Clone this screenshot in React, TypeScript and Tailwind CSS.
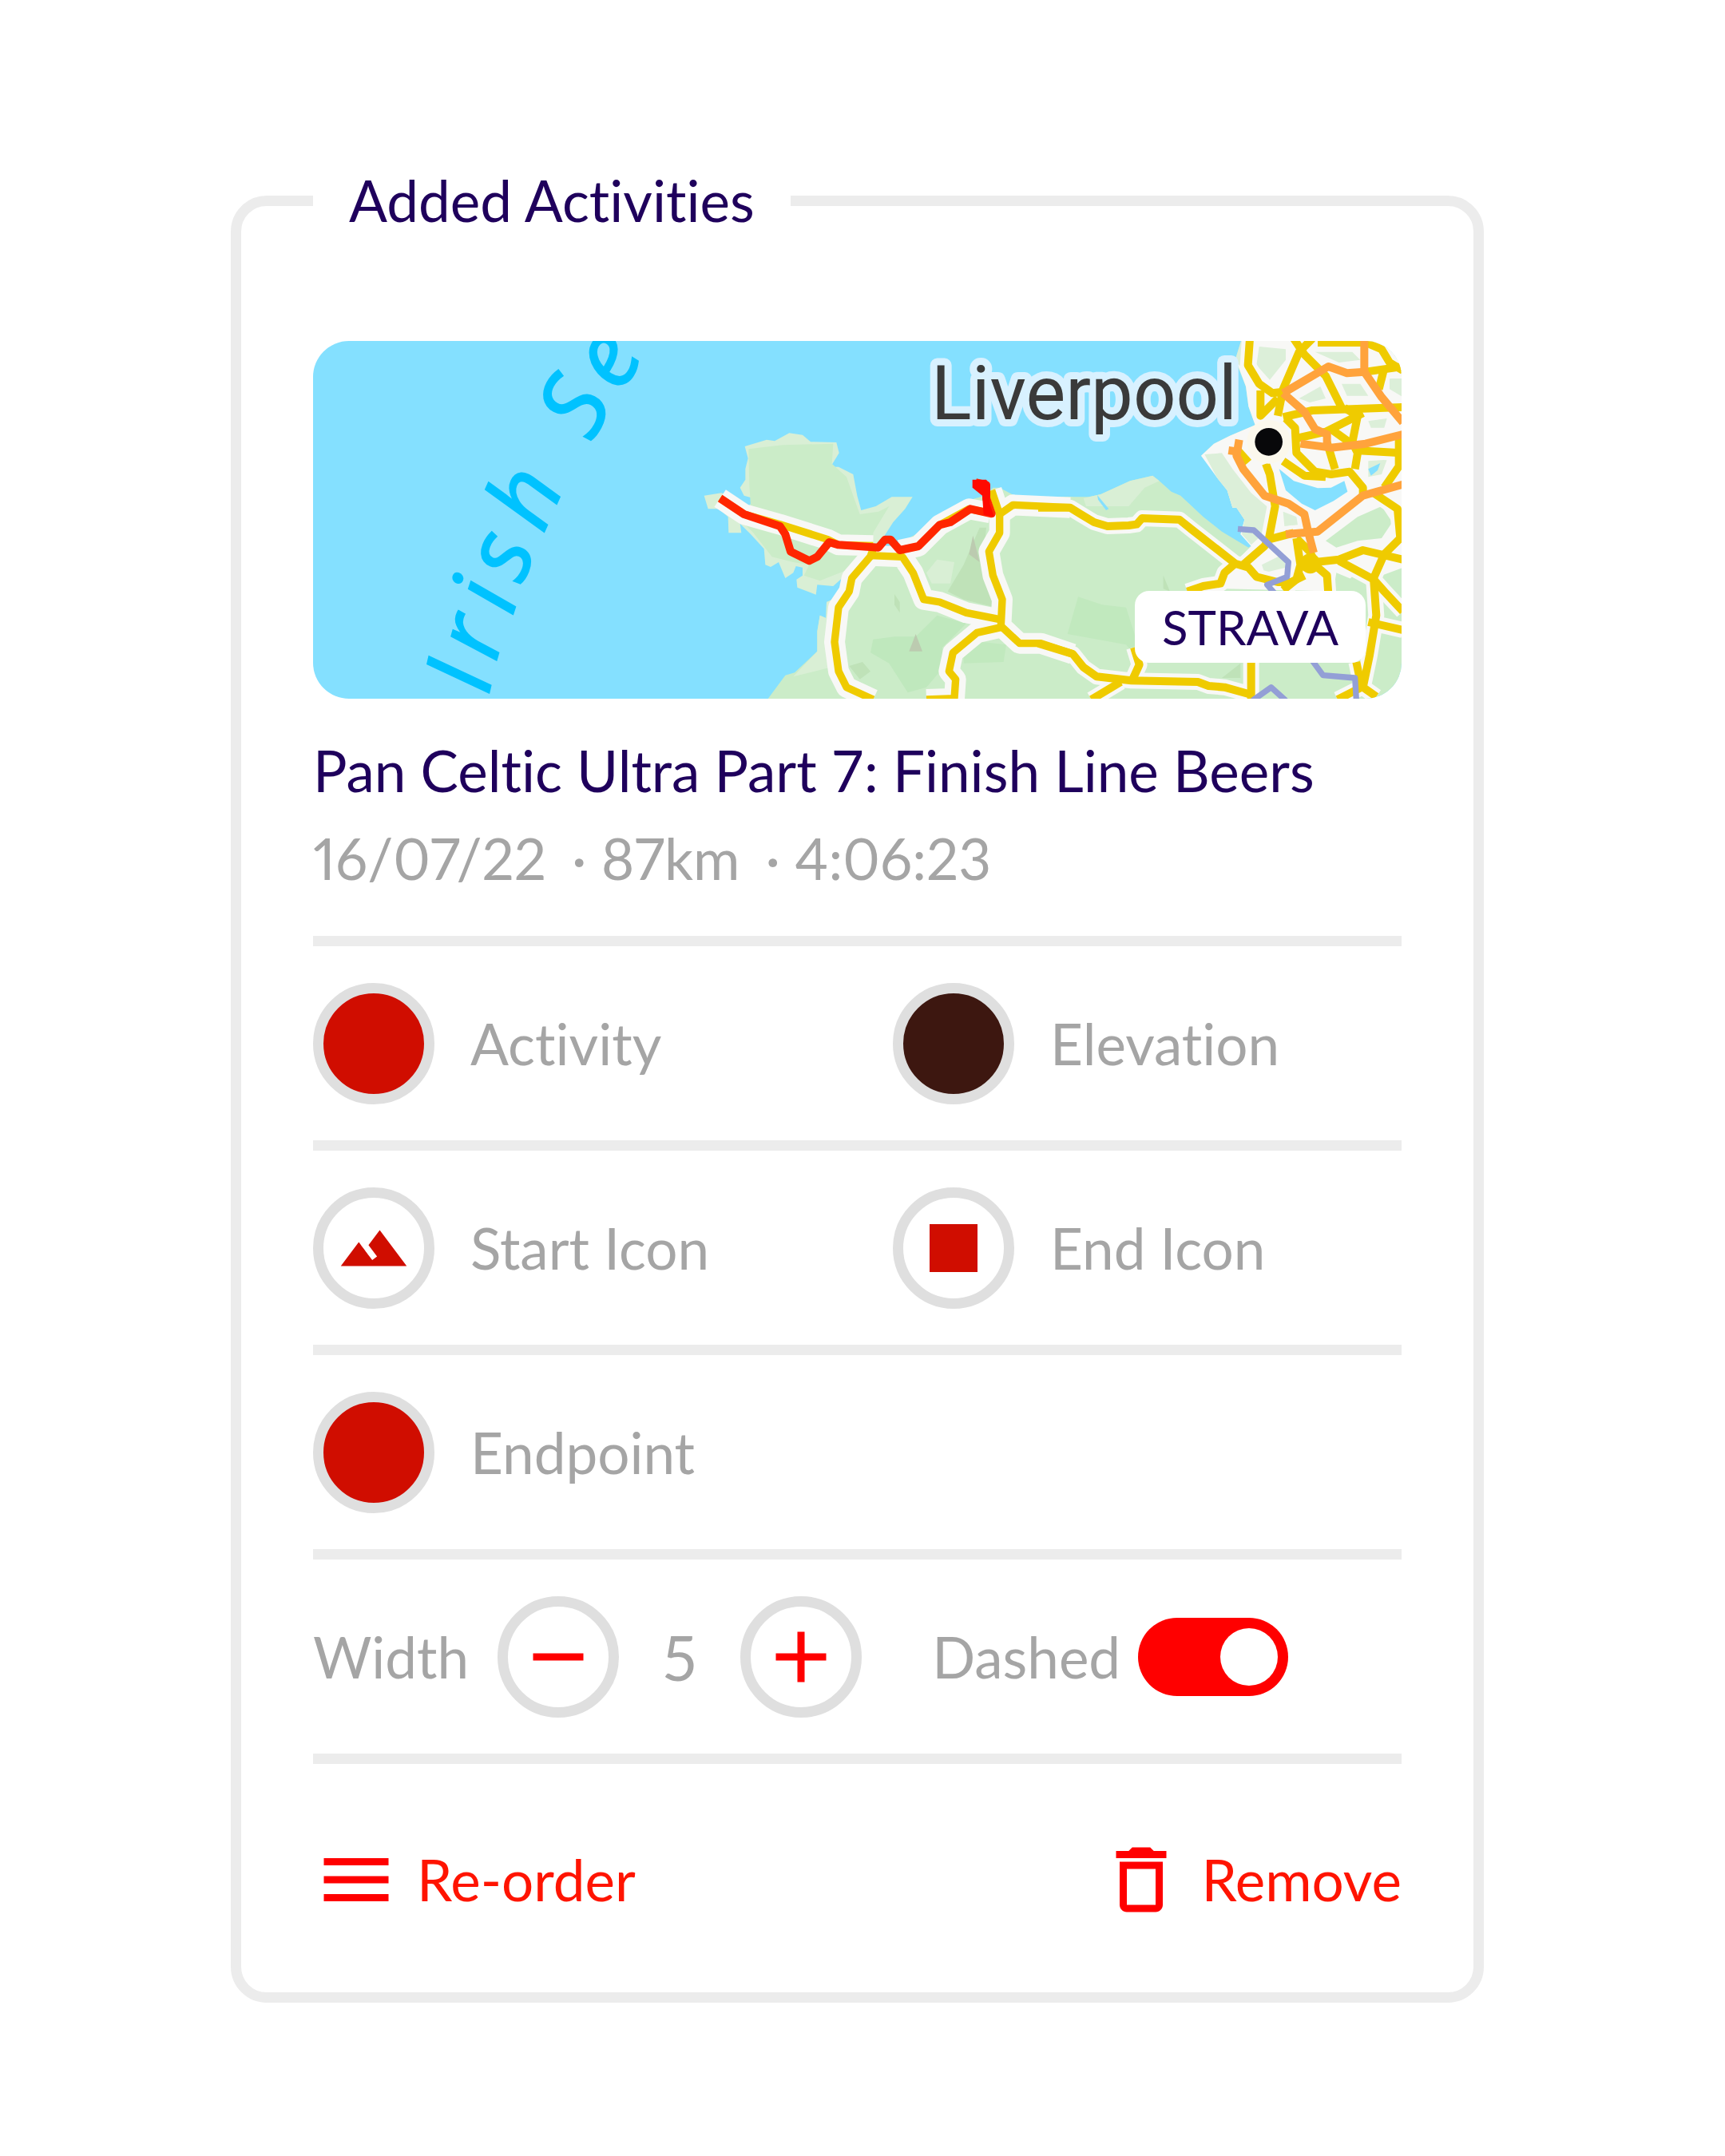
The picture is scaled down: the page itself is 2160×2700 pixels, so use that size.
import { useState } from "react";
import type { ReactNode } from "react";
import { MdAdd, MdDeleteOutline, MdLandscape, MdMenu, MdRemove } from "react-icons/md";

const WEST_ROADS = [
  "125,610 215,670 350,708 530,765 570,785 700,788",
  "800,805 870,790 950,710 1060,650 1140,665",
  "700,800 690,828 620,910 610,960 570,1020 555,1150 570,1260 600,1320 700,1366",
  "690,825 810,830 850,890 890,990 950,1000 1050,1040 1175,1065",
  "1145,580 1175,670 1175,740 1135,810 1150,900 1185,990 1180,1090 1250,1155 1330,1155 1450,1195",
  "1180,1095 1090,1115 1000,1190 985,1260 1010,1290 1005,1362 900,1366",
  "1175,670 1225,635 1440,645",
];

const EAST_ROADS = [
  "0,645 120,645 160,670 210,700 260,715 340,712 370,708 390,685 530,690 580,730 740,855 790,870 820,905 900,925 950,925 1000,900",
  "740,855 700,890 685,930 620,940 560,960",
  "770,860 850,790 865,765 960,740",
  "865,770 890,640 870,520 855,480",
  "795,10 788,110 830,180 880,215 920,210",
  "960,10 1000,70 1080,150 1140,270",
  "1030,10 980,60 920,200 900,300",
  "1050,25 1230,25 1290,50 1320,100 1370,130",
  "1230,135 1370,115",
  "1300,120 1280,200",
  "920,305 1030,280 1370,268",
  "835,205 835,300 900,235",
  "930,310 965,345 970,440 1040,510 1100,520 1170,510 1220,570 1220,600",
  "920,470 1000,525 1080,530",
  "1150,270 1200,300 1180,400 1200,440 1190,500",
  "1220,290 1080,360 970,385",
  "1100,350 1170,400",
  "1085,400 1115,500",
  "1190,430 1370,440",
  "1355,370 1355,490 1300,570",
  "1260,590 1350,650 1360,760 1300,820 1260,910 1270,1050 1245,1200 1220,1320 1270,1355",
  "1040,850 1130,840 1220,805 1370,840",
  "1130,845 1260,915 1300,960 1370,1035",
  "1050,870 1085,900 1090,970",
  "970,760 985,860 970,915 920,955",
  "970,760 1020,810 1040,850",
  "790,475 750,430",
  "1240,1075 1370,1105",
  "0,1155 130,1195 170,1245 220,1280 350,1295 600,1300 640,1315 700,1320 790,1345",
  "355,1290 380,1235 360,1170",
  "200,1366 310,1300",
  "800,1220 800,1366",
  "1195,1225 1215,1320 1125,1366",
];

const MOTORWAYS = [
  "920,215 1090,115 1160,140 1225,135 1290,230 1370,325",
  "1225,10 1225,135",
  "920,215 1000,285 1040,350 1085,370 1085,415",
  "985,405 1100,420 1230,405 1370,370",
  "755,390 745,450 770,500 850,600 940,630 1000,670 1015,740 1035,815",
  "715,430 750,435",
  "930,745 1050,735 1220,600 1370,558",
];

const BORDERS = [
  "750,725 810,730 940,850 935,905 860,935 900,980",
  "1030,1220 1070,1275 1190,1285 1195,1366",
  "805,1370 875,1320 930,1370",
];

const ROUTE =
  "125,610 215,670 350,715 370,745 390,810 460,845 490,830 535,775 570,785 720,795 745,765 765,765 800,805 870,790 950,710 990,700 1065,650 1145,668 1125,610 1125,560 1085,550";

function Lines({ lines, color, width }: { lines: string[]; color: string; width: number }) {
  return (
    <g fill="none" stroke={color} strokeWidth={width} strokeLinejoin="round">
      {lines.map((points) => (
        <polyline key={points} points={points} />
      ))}
    </g>
  );
}

function RouteMap() {
  return (
    <svg
      viewBox="0 0 4089 1344"
      preserveAspectRatio="xMidYMid slice"
      className="block h-full w-full"
      role="img"
      aria-label="Route map"
    >
      <rect width="4089" height="1344" fill="#84e0ff" />

      <g transform="translate(1404 -19)">
        <path
          fill="#d9efd5"
          d="M218 415L300 390 330 395 385 365 435 372 465 398 562 400 572 440 540 492 570 492 625 520 640 600 655 655 710 640 770 605 848 605 820 650 775 700 740 755 690 800 640 850 600 895 550 940 490 935 485 972 415 945 412 915 435 900 435 870 410 865 400 890 370 910 345 850 315 868 295 860 290 800 240 745 200 705 205 740 157 740 155 680 120 650 80 650 65 600 130 590 200 620 235 640 250 610 215 600 200 570 220 540 220 500 230 460Z"
        />
        <path
          fill="#cbecc8"
          d="M232 425L360 410 550 405 545 480 600 530 625 600 650 670 720 660 760 640 700 740 700 790 600 880 500 920 440 900 460 860 400 850 320 830 250 740 200 690 240 640 235 560Z"
        />
        <path
          fill="#cbecc8"
          d="M300 1370L370 1275 405 1265 490 1185 490 1110 500 1050 523 1060 525 1000 560 985 600 900 650 845 700 800 780 790 870 740 960 660 1050 620 1120 600 1150 570 1175 570 1240 605 1450 605 1450 1370Z"
        />
        <path fill="#d9efd5" d="M490 1185V1110L500 1050 523 1060 525 1000 560 985 545 1140 560 1240 400 1280Z" />
        <path fill="#bfe2b8" d="M1040 860L1100 720 1125 720 1110 870 1160 1020 1040 990 980 960Z" />
        <path fill="#d9efd5" d="M900 890L940 840 1005 850 990 930 920 930Z" />
        <path fill="#bfe8bd" d="M860 1130L940 1050 1050 1080 960 1170 960 1250 900 1320 830 1340 760 1230 690 1190 700 1140 780 1130Z" />
        <path fill="#bfe2b8" d="M610 1240L660 1225 690 1260 650 1290Z" />
        <path fill="#bfe2b8" d="M780 970L800 1000 800 1040 780 1010Z" />
        <path fill="#c1e9be" d="M1040 1200L1110 1150 1200 1160 1190 1225 1040 1230Z" />
        <path fill="#bccbb0" d="M1075 750L1100 850 1060 820ZM860 1120L885 1185H835Z" />
      </g>

      <g transform="translate(2724 -19)">
        <path
          fill="#cbecc8"
          d="M60 605H190L235 595 345 545 430 525 455 545 500 585 535 600 620 680 690 735 790 795 810 780 760 745 775 690 745 645 730 645 710 580 670 530 640 480 612 450 660 405 720 375 815 335 790 265 780 190 740 90 765 10H1400V1370H60Z"
        />
        <path fill="#d9efd5" d="M170 610L235 595 345 545 430 525 455 545 400 570 340 640 180 640Z" />
        <path
          fill="#f8f8f6"
          d="M612 450L660 405 720 375 815 335 790 265 780 190 750 110 790 10H1400V860L1290 900 1200 880 1130 960 700 950 700 890 800 790 760 745 775 690 745 645 730 645 710 580 670 530Z"
        />
        <g fill="#dcefd9">
          <path d="M740 90L765 10 785 80 780 140Z" />
          <path d="M625 445L690 440 730 500 800 590 870 650 850 740 800 785 765 745 775 690 745 645 730 645 710 580 670 530Z" />
          <path d="M830 40L930 50 930 90 870 165 820 110Z" />
          <path d="M1040 60L1180 60 1210 90 1130 100Z" />
          <path d="M980 235L1060 190 1080 235 1020 250Z" />
          <path d="M1140 180L1210 180 1240 225 1160 225Z" />
          <path d="M1320 160L1370 160V230L1320 200Z" />
          <path d="M1240 320L1310 310 1300 345 1250 345Z" />
          <path d="M840 860L920 820 930 870 850 890Z" />
          <path d="M1240 470L1310 465 1290 520 1240 530Z" />
          <path d="M920 660L970 680 975 710 925 715Z" />
        </g>
        <path fill="#cbecc8" d="M1080 770L1200 680 1290 640 1330 700 1290 760 1200 770 1120 795Z" />
        <path fill="#cbecc8" d="M1120 890L1240 940 1250 1050 1240 1080 1110 950ZM1310 920L1370 870V950Z" />
        <path fill="#c1e9be" d="M150 980L240 1010 330 1020 400 1240 330 1160 110 1120Z" />
        <path fill="#bfe2b8" d="M470 900L495 960 470 950ZM760 1230V1285H690Z" />
        <path fill="#84e0ff" d="M222 598L265 650 255 655 225 615Z" />
      </g>

      <g transform="translate(1404 -19)">
        <Lines lines={WEST_ROADS} color="#f8f8f6" width={78} />
      </g>
      <g transform="translate(2724 -19)">
        <Lines lines={EAST_ROADS} color="#f8f8f6" width={60} />
        <g fill="#84e0ff">
          <path d="M905 500L960 545 1050 572 1100 570 1150 545 1162 585 1110 620 1040 655 990 630 930 580Z" />
          <path d="M1240 500L1285 478 1275 505 1250 525Z" />
        </g>
      </g>
      <g transform="translate(1404 -19)">
        <Lines lines={WEST_ROADS} color="#efcb00" width={28} />
        <Lines lines={[ROUTE]} color="#ff2600" width={30} />
        <path fill="#ff0a00" d="M1073 540H1125L1140 560 1138 630 1155 680 1115 672 1110 600 1073 570Z" />
      </g>
      <g transform="translate(2724 -19)">
        <Lines lines={EAST_ROADS} color="#efcb00" width={30} />
        <circle cx="1022" cy="855" r="38" fill="#efcb00" />
        <Lines lines={MOTORWAYS} color="#ffa33c" width={30} />
        <Lines lines={BORDERS} color="#939fd6" width={22} />
        <circle cx="866" cy="398" r="82" fill="#fbf8ec" />
        <circle cx="866" cy="398" r="52" fill="#08080a" />
      </g>

      {/* sea label follows a slight curve, so every glyph is placed */}
      <text
        x="658 686 748 786 864 900 1047 1154"
        y="1336 1208 1036 916 726 600 382 200"
        rotate="-77 -74 -72 -69 -66 -66 -62 -58"
        fill="#00c2ff"
        stroke="#00c2ff"
        strokeWidth="6"
        className="font-['Open_Sans',sans-serif] text-[350px] italic"
      >
        Irish Se
      </text>
      <text
        x="2322"
        y="293"
        fill="#3a3a3a"
        stroke="#d8f1ff"
        strokeWidth="54"
        strokeLinejoin="round"
        paintOrder="stroke"
        className="font-[Roboto,sans-serif] text-[282px]"
      >
        Liverpool
      </text>
    </svg>
  );
}

const RING = "flex size-[152px] shrink-0 items-center justify-center rounded-full border-[13px] border-[#dfdfdf]";

interface OptionProps {
  label: string;
  fill?: string;
  children?: ReactNode;
}

function Option({ label, fill = "bg-white", children }: OptionProps) {
  return (
    <button type="button" className="flex items-center gap-[45px] text-left">
      <span className={`${RING} ${fill}`}>{children}</span>
      <span>{label}</span>
    </button>
  );
}

function Row({ children }: { children: ReactNode }) {
  return (
    <div className="grid h-[256px] grid-cols-[726px_1fr] items-center border-t-[13px] border-[#ececec]">
      {children}
    </div>
  );
}

export default function App() {
  const [width, setWidth] = useState(5);
  const [dashed, setDashed] = useState(true);

  return (
    <main className="min-h-screen bg-white pt-[206px] pr-[302px] pb-[192px] pl-[289px] font-[Lato,sans-serif] text-[71px] leading-[90px] text-[#a5a5a5] [font-variant-ligatures:none]">
      <fieldset className="min-w-0 rounded-[45px] border-[13px] border-[#ececec] px-[90px] pt-[131px] pb-[87px]">
        <legend className="px-[45px] text-[#1f005c]">Added Activities</legend>

        <div className="relative h-[448px] overflow-hidden rounded-[45px]">
          <RouteMap />
          <span className="absolute right-[45px] bottom-[45px] rounded-[18px] bg-white px-[34px] text-[60px] text-[#1f005c]">
            STRAVA
          </span>
        </div>

        <h2 className="mt-[35px] leading-[110px] text-[#1f005c]">Pan Celtic Ultra Part 7: Finish Line Beers</h2>
        <p className="mb-[42px] flex leading-[110px] proportional-nums">
          <span>16/07/22</span>
          <span className="ml-[32px]">· 87km</span>
          <span className="ml-[32px]">· 4:06:23</span>
        </p>

        <Row>
          <Option label="Activity" fill="bg-[#d00d00]" />
          <Option label="Elevation" fill="bg-[#3d1710]" />
        </Row>
        <Row>
          <Option label="Start Icon">
            <MdLandscape className="size-[90px] shrink-0 text-[#d00d00]" />
          </Option>
          <Option label="End Icon">
            <span className="size-[60px] bg-[#d00d00]" />
          </Option>
        </Row>
        <Row>
          <Option label="Endpoint" fill="bg-[#d00d00]" />
        </Row>

        <div className="flex h-[269px] items-center border-y-[13px] border-[#ececec]">
          <span className="mr-[36px]">Width</span>
          <button type="button" aria-label="Decrease width" className={RING} onClick={() => setWidth(width - 1)}>
            <MdRemove className="size-[108px] shrink-0 text-[#ff0000]" />
          </button>
          <output className="w-[152px] text-center text-[78px]">{width}</output>
          <button type="button" aria-label="Increase width" className={RING} onClick={() => setWidth(width + 1)}>
            <MdAdd className="size-[108px] shrink-0 text-[#ff0000]" />
          </button>
          <label className="ml-[88px] flex items-center gap-[22px]">
            Dashed
            <input
              type="checkbox"
              role="switch"
              checked={dashed}
              onChange={(e) => setDashed(e.target.checked)}
              className="flex h-[98px] w-[188px] appearance-none items-center rounded-full bg-[#c4c4c4] p-[13px] before:size-[72px] before:rounded-full before:bg-white checked:justify-end checked:bg-[#ff0000]"
            />
          </label>
        </div>

        <div className="mt-[91px] flex items-center justify-between text-[#ff1400]">
          <button type="button" className="flex items-center gap-[22px]">
            <MdMenu className="size-[108px] text-[#ff0000]" />
            Re-order
          </button>
          <button type="button" className="flex items-center gap-[22px]">
            <MdDeleteOutline className="size-[108px] text-[#ff0000]" />
            Remove
          </button>
        </div>
      </fieldset>
    </main>
  );
}
